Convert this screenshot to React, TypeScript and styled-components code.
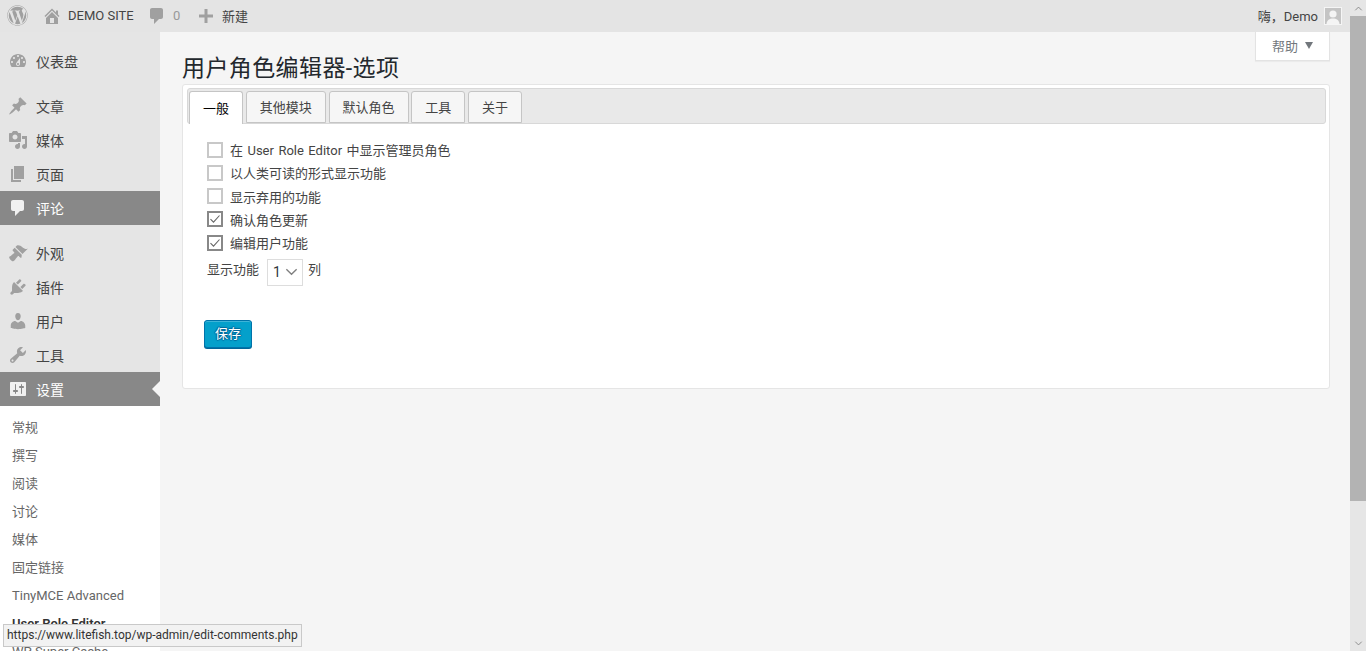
import styled, { createGlobalStyle } from 'styled-components';
import { FaWordpress } from 'react-icons/fa';

const GlobalStyle = createGlobalStyle`
    html, body {
        margin: 0;
        padding: 0;
        height: 100%;
        overflow: hidden;
    }
    body {
        font-family: Roboto, "Noto Sans CJK SC", sans-serif;
        font-size: 13px;
        color: #444;
        background: #f5f5f5;
    }
`;

const ICONS: Record<string, string> = {
    dashboard:
        'M3.76 16h12.48c1.1-1.37 1.76-3.11 1.76-5 0-4.42-3.58-8-8-8s-8 3.58-8 8c0 1.89.66 3.63 1.76 5zM10 4c.55 0 1 .45 1 1s-.45 1-1 1-1-.45-1-1 .45-1 1-1zM6 6c.55 0 1 .45 1 1s-.45 1-1 1-1-.45-1-1 .45-1 1-1zm8 0c.55 0 1 .45 1 1s-.45 1-1 1-1-.45-1-1 .45-1 1-1zm-5.37 5.55L12 7v6c0 1.1-.9 2-2 2s-2-.9-2-2c0-.57.24-1.08.63-1.45zM4 10c.55 0 1 .45 1 1s-.45 1-1 1-1-.45-1-1 .45-1 1-1zm12 0c.55 0 1 .45 1 1s-.45 1-1 1-1-.45-1-1 .45-1 1-1zm-5 3c0-.55-.45-1-1-1s-1 .45-1 1 .45 1 1 1 1-.45 1-1z',
    post: 'M10.44 3.02l1.82-1.82 6.36 6.35-1.83 1.82c-1.05-.68-2.48-.57-3.41.36l-.75.75c-.92.93-1.04 2.35-.35 3.41l-1.83 1.82-2.41-2.41-2.8 2.79c-.42.42-3.38 2.71-3.8 2.29s1.86-3.39 2.28-3.81l2.79-2.79L4.1 9.36l1.83-1.82c1.05.69 2.48.57 3.4-.36l.75-.75c.93-.92 1.05-2.35.36-3.41z',
    media: 'M13 11V4c0-.55-.45-1-1-1h-1.67L9 1H5L3.67 3H2c-.55 0-1 .45-1 1v7c0 .55.45 1 1 1h10c.55 0 1-.45 1-1zM7 4.5c1.38 0 2.5 1.12 2.5 2.5S8.38 9.5 7 9.5 4.5 8.38 4.5 7 5.62 4.5 7 4.5zM14 6h5v10.5c0 1.38-1.12 2.5-2.5 2.5S14 17.88 14 16.5s1.12-2.5 2.5-2.5c.17 0 .34.02.5.05V9h-3V6zm-4 8.05V13h2v3.5c0 1.38-1.12 2.5-2.5 2.5S7 17.88 7 16.5 8.12 14 9.5 14c.17 0 .34.02.5.05z',
    page: 'M6 15V2h10v13H6zm-1 1h8v2H3V5h2v11z',
    comments:
        'M5 2h9c1.1 0 2 .9 2 2v7c0 1.1-.9 2-2 2h-2l-5 5v-5H5c-1.1 0-2-.9-2-2V4c0-1.1.9-2 2-2z',
    appearance:
        'M14.48 11.06L7.41 3.99l1.5-1.5c.5-.56 2.3-.47 3.51.32 1.21.8 1.43 1.28 2.91 2.1 1.18.64 2.45 1.26 4.45.85zm-.71.71L6.7 4.7 4.93 6.47c-.39.39-.39 1.02 0 1.41l1.06 1.06c.39.39.39 1.03 0 1.42-.6.6-1.43 1.11-2.21 1.69-.35.26-.7.53-1.01.84C1.43 13.23.97 14 1.24 14.76 1.7 16 3 17.7 4.24 18.16c.76.27 1.53-.19 2.87-1.53.31-.31.58-.66.84-1.01.58-.78 1.09-1.61 1.69-2.21.39-.39 1.03-.39 1.42 0l1.06 1.06c.39.39 1.02.39 1.41 0z',
    plugins:
        'M13.11 4.36L9.87 7.6 8 5.73l3.24-3.24c.35-.34 1.05-.2 1.56.32.52.51.66 1.21.31 1.55zm-8 1.77l.91-1.12 9.01 9.01-1.19.84c-.71.71-2.63 1.16-3.82 1.16H6.14L4.9 17.26c-.59.59-1.54.59-2.12 0-.59-.58-.59-1.53 0-2.12l1.24-1.24v-3.88c0-1.13.4-3.19 1.09-3.89zm7.26 3.97l3.24-3.24c.34-.35 1.04-.21 1.55.31.52.51.66 1.21.31 1.55l-3.24 3.25z',
    users: 'M10 9.25c-2.27 0-2.73-3.44-2.73-3.44C7 4.02 7.82 2 9.97 2c2.16 0 2.98 2.02 2.71 3.81 0 0-.41 3.44-2.68 3.44zm0 2.57L12.72 10c2.39 0 4.52 2.33 4.52 4.53v2.49s-3.65 1.13-7.24 1.13c-3.65 0-7.24-1.13-7.24-1.13v-2.49c0-2.25 1.94-4.48 4.47-4.48z',
    tools: 'M16.68 9.77c-1.34 1.34-3.3 1.67-4.95.99l-5.41 6.52c-.99.99-2.59.99-3.58 0s-.99-2.59 0-3.57l6.52-5.42c-.68-1.65-.35-3.61.99-4.95 1.28-1.28 3.12-1.62 4.72-1.06l-2.89 2.89 2.82 2.82 2.86-2.87c.53 1.58.18 3.39-1.08 4.65zM3.81 16.21c.4.39 1.04.39 1.43 0 .4-.4.4-1.04 0-1.43-.39-.4-1.03-.4-1.43 0-.39.39-.39 1.03 0 1.43z',
    settings:
        'M18 16V4c0-.55-.45-1-1-1H3c-.55 0-1 .45-1 1v12c0 .55.45 1 1 1h14c.55 0 1-.45 1-1zM8 11h1c.55 0 1 .45 1 1s-.45 1-1 1H8v1.5c0 .28-.22.5-.5.5s-.5-.22-.5-.5V13H6c-.55 0-1-.45-1-1s.45-1 1-1h1V5.5c0-.28.22-.5.5-.5s.5.22.5.5V11zm5-2h-1c-.55 0-1-.45-1-1s.45-1 1-1h1V5.5c0-.28.22-.5.5-.5s.5.22.5.5V7h1c.55 0 1 .45 1 1s-.45 1-1 1h-1v5.5c0 .28-.22.5-.5.5s-.5-.22-.5-.5V9z',
    home: 'M16 8.5l1.53 1.53-1.06 1.06L10 4.62l-6.47 6.47-1.06-1.06L10 2.5l4 4v-2h2v4zm-6-2.46l6 5.99V18H4v-5.97zM12 17v-5H8v5h4z',
    plus: 'M17 8.5v3h-5.5V17h-3v-5.5H3v-3h5.5V3h3v5.5z'
};

const Dashicon = ({ name, color = '#a0a0a0' }: { name: string; color?: string }) => (
    <svg width="20" height="20" viewBox="0 0 20 20" fill={color}>
        <path d={ICONS[name]} />
    </svg>
);

const Page = styled.div`
    display: flex;
    width: 1366px;
    height: 651px;
    overflow: hidden;
`;

const Window = styled.div`
    flex: 1;
    min-width: 0;
    display: flex;
    flex-direction: column;
`;

const TopBar = styled.header`
    box-sizing: border-box;
    height: 32px;
    padding-bottom: 1px;
    flex-shrink: 0;
    display: flex;
    align-items: center;
    background: #e4e4e4;
    color: #444;
    font-size: 13px;
`;

const BarItem = styled.div<{ $gap?: number; $width?: number }>`
    display: flex;
    align-items: center;
    gap: ${(p) => p.$gap ?? 5}px;
    width: ${(p) => (p.$width ? `${p.$width}px` : 'auto')};
    flex-shrink: 0;
`;

const Logo = styled(BarItem)`
    padding-left: 7px;
    color: #a0a0a0;
`;

const CommentCount = styled.span`
    color: #999;
`;

const UserBox = styled.div`
    margin-left: auto;
    display: flex;
    align-items: center;
    gap: 6px;
    padding-right: 8px;
`;

const Avatar = styled.span`
    width: 16px;
    height: 16px;
    border: 1px solid #f5f5f5;
    background: #c4c4c4;
    display: block;
    overflow: hidden;
`;

const Body = styled.div`
    flex: 1;
    min-height: 0;
    display: flex;
`;

const Sidebar = styled.nav`
    width: 160px;
    flex-shrink: 0;
    padding-top: 12px;
    background: #e5e5e5;
    overflow: hidden;
`;

const MenuGroup = styled.ul`
    list-style: none;
    margin: 0 0 11px;
    padding: 0;
`;

const MenuItem = styled.li<{ $active?: boolean; $current?: boolean }>`
    position: relative;
    height: 34px;
    display: flex;
    align-items: center;
    gap: 8px;
    padding-left: 8px;
    font-size: 14px;
    color: ${(p) => (p.$active ? '#fff' : '#444')};
    background: ${(p) => (p.$active ? '#888' : 'transparent')};

    ${(p) =>
        p.$current &&
        `&::after {
            content: '';
            position: absolute;
            right: 0;
            top: 9px;
            border: 8px solid transparent;
            border-left-width: 0;
            border-right-color: #f5f5f5;
        }`}
`;

const SubMenu = styled.ul`
    list-style: none;
    margin: -11px 0 0;
    padding: 7px 0;
    background: #fff;
`;

const SubItem = styled.li<{ $current?: boolean }>`
    height: 28px;
    line-height: 30px;
    padding-left: 12px;
    font-size: 13px;
    color: ${(p) => (p.$current ? '#333' : '#666')};
    font-weight: ${(p) => (p.$current ? 600 : 400)};
`;

const Content = styled.main`
    flex: 1;
    min-width: 0;
    padding: 0 20px 0 22px;
    background: #f5f5f5;
`;

const HelpRow = styled.div`
    display: flex;
    justify-content: flex-end;
    height: 29px;
`;

const HelpTab = styled.div`
    width: 75px;
    box-sizing: border-box;
    display: flex;
    align-items: center;
    gap: 7px;
    padding: 0 0 2px 16px;
    background: #fff;
    border: 1px solid #e3e3e3;
    border-top: 0;
    color: #72777c;
    font-size: 13px;
    box-shadow: 0 1px 1px rgba(0, 0, 0, 0.04);

    &::after {
        content: '';
        border: 4.5px solid transparent;
        border-top: 7px solid #72777c;
        border-bottom: 0;
    }
`;

const Title = styled.h1`
    margin: -9px 0 0;
    height: 32px;
    line-height: 34px;
    font-size: 23px;
    font-weight: 400;
    letter-spacing: 0.4px;
    color: #23282d;
`;

const Card = styled.section`
    box-sizing: border-box;
    height: 305px;
    padding: 3px 3px 0 4px;
    background: #fff;
    border: 1px solid #e5e5e5;
    border-radius: 3px;
`;

const TabBar = styled.div`
    box-sizing: border-box;
    height: 36px;
    display: flex;
    align-items: flex-end;
    gap: 2.75px;
    padding-left: 1px;
    background: #e9e9e9;
    border: 1px solid #d8d8d8;
    border-radius: 3px;
`;

const Tab = styled.div<{ $active?: boolean }>`
    box-sizing: border-box;
    height: ${(p) => (p.$active ? 33 : 32)}px;
    margin-bottom: ${(p) => (p.$active ? -1 : 0)}px;
    padding: 0 13px 2px;
    display: flex;
    align-items: center;
    border: 1px solid #c5c5c5;
    border-bottom: ${(p) => (p.$active ? 0 : 1)}px solid #c5c5c5;
    border-radius: 3px 3px 0 0;
    background: ${(p) => (p.$active ? '#fff' : '#f6f6f6')};
    color: ${(p) => (p.$active ? '#000' : '#454545')};
    font-size: 13px;
`;

const Form = styled.form`
    display: flex;
    flex-direction: column;
    padding: 14px 0 0 20px;
`;

const CheckRow = styled.label`
    height: 23.25px;
    display: flex;
    align-items: center;
    gap: 7px;
    font-size: 13px;
    word-spacing: 1.25px;
    color: #444;
`;

const CheckBox = styled.span<{ $checked?: boolean }>`
    box-sizing: border-box;
    width: 16px;
    height: 16px;
    display: flex;
    align-items: center;
    justify-content: center;
    background: #fff;
    border: ${(p) => (p.$checked ? '2px solid #888' : '2px solid #c8c8c8')};
`;

const SelectRow = styled.div`
    display: flex;
    align-items: flex-start;
    gap: 5px;
    margin-top: 5px;
    height: 27px;
    line-height: 22px;
    font-size: 13px;
    color: #444;
`;

const SelectBox = styled.div`
    box-sizing: border-box;
    width: 36px;
    height: 27px;
    margin-left: 3px;
    padding: 0 4px 2px 5px;
    display: flex;
    align-items: center;
    justify-content: space-between;
    border: 1px solid #ddd;
    background: #fff;
    font-size: 14px;
    color: #32373c;
`;

const SaveButton = styled.button`
    box-sizing: border-box;
    width: 48px;
    height: 28px;
    margin: 34px 0 0 -3px;
    padding: 0 0 4px;
    background: #04a0cb;
    border: 1px solid #0073aa;
    border-radius: 3px;
    box-shadow: 0 1px 0 #006799, inset 0 1px 0 rgba(120, 200, 230, 0.5);
    color: #fff;
    font-family: inherit;
    font-size: 13px;
    text-shadow: 0 -1px 1px #006799, 1px 0 1px #006799, 0 1px 1px #006799, -1px 0 1px #006799;
`;

const Scrollbar = styled.div`
    width: 16px;
    flex-shrink: 0;
    display: flex;
    flex-direction: column;
    background: #e6e6e6;
`;

const ScrollArrow = styled.div`
    height: 16px;
    flex-shrink: 0;
    display: flex;
    align-items: center;
    justify-content: center;
`;

const ScrollThumb = styled.div`
    height: 485px;
    flex-shrink: 0;
    background: #b3b3b3;
`;

const ScrollTrack = styled.div`
    flex: 1;
`;

const StatusBubble = styled.div`
    position: absolute;
    left: 3px;
    top: 624px;
    box-sizing: border-box;
    width: 299px;
    height: 23px;
    padding-left: 3px;
    line-height: 21px;
    white-space: nowrap;
    background: #f2f2f2;
    border: 1px solid #c9c9c9;
    color: #333;
    font-size: 12px;
`;

const Chevron = ({ up, size = 11 }: { up?: boolean; size?: number }) => (
    <svg width={size} height={Math.round(size * 0.6)} viewBox="0 0 11 7" fill="none" stroke="#808080" strokeWidth="1.2">
        <path d={up ? 'M1 6l4.5-4.5L10 6' : 'M1 1l4.5 4.5L10 1'} />
    </svg>
);

const CheckMark = () => (
    <svg width="12" height="12" viewBox="0 0 12 12" fill="none" stroke="#666" strokeWidth="1.1">
        <path d="M1.5 6.2l3 3L10.5 2.5" />
    </svg>
);

const topGroup = [
    { icon: 'post', label: '文章' },
    { icon: 'media', label: '媒体' },
    { icon: 'page', label: '页面' },
    { icon: 'comments', label: '评论', active: true }
];

const lowerGroup = [
    { icon: 'appearance', label: '外观' },
    { icon: 'plugins', label: '插件' },
    { icon: 'users', label: '用户' },
    { icon: 'tools', label: '工具' },
    { icon: 'settings', label: '设置', active: true, current: true }
];

const subItems = ['常规', '撰写', '阅读', '讨论', '媒体', '固定链接', 'TinyMCE Advanced', 'User Role Editor', 'WP Super Cache'];

const tabs = ['一般', '其他模块', '默认角色', '工具', '关于'];

const options = [
    { label: '在 User Role Editor 中显示管理员角色' },
    { label: '以人类可读的形式显示功能' },
    { label: '显示弃用的功能' },
    { label: '确认角色更新', checked: true },
    { label: '编辑用户功能', checked: true }
];

export default function App() {
    return (
        <Page>
            <GlobalStyle />
            <Window>
                <TopBar>
                    <Logo $width={35}>
                        <FaWordpress size={21} />
                    </Logo>
                    <BarItem $width={105} $gap={6}>
                        <Dashicon name="home" />
                        DEMO SITE
                    </BarItem>
                    <BarItem $width={49} $gap={6}>
                        <Dashicon name="comments" />
                        <CommentCount>0</CommentCount>
                    </BarItem>
                    <BarItem $gap={6}>
                        <Dashicon name="plus" />
                        新建
                    </BarItem>
                    <UserBox>
                        嗨，Demo
                        <Avatar>
                            <svg width="16" height="16" viewBox="0 0 16 16" fill="#f4f4f4">
                                <circle cx="8" cy="6" r="3.6" />
                                <path d="M1.5 16c.4-4 3-5.5 6.5-5.5s6.1 1.5 6.5 5.5z" />
                            </svg>
                        </Avatar>
                    </UserBox>
                </TopBar>
                <Body>
                    <Sidebar>
                        <MenuGroup>
                            <MenuItem>
                                <Dashicon name="dashboard" />
                                仪表盘
                            </MenuItem>
                        </MenuGroup>
                        <MenuGroup>
                            {topGroup.map((item) => (
                                <MenuItem key={item.label} $active={item.active}>
                                    <Dashicon name={item.icon} color={item.active ? '#f0f0f0' : '#a0a0a0'} />
                                    {item.label}
                                </MenuItem>
                            ))}
                        </MenuGroup>
                        <MenuGroup>
                            {lowerGroup.map((item) => (
                                <MenuItem key={item.label} $active={item.active} $current={item.current}>
                                    <Dashicon name={item.icon} color={item.active ? '#f0f0f0' : '#a0a0a0'} />
                                    {item.label}
                                </MenuItem>
                            ))}
                        </MenuGroup>
                        <SubMenu>
                            {subItems.map((item) => (
                                <SubItem key={item} $current={item === 'User Role Editor'}>
                                    {item}
                                </SubItem>
                            ))}
                        </SubMenu>
                    </Sidebar>
                    <Content>
                        <HelpRow>
                            <HelpTab>帮助</HelpTab>
                        </HelpRow>
                        <Title>用户角色编辑器-选项</Title>
                        <Card>
                            <TabBar>
                                {tabs.map((tab, i) => (
                                    <Tab key={tab} $active={i === 0}>
                                        {tab}
                                    </Tab>
                                ))}
                            </TabBar>
                            <Form>
                                {options.map((option) => (
                                    <CheckRow key={option.label}>
                                        <CheckBox $checked={option.checked}>
                                            {option.checked && <CheckMark />}
                                        </CheckBox>
                                        {option.label}
                                    </CheckRow>
                                ))}
                                <SelectRow>
                                    显示功能
                                    <SelectBox>
                                        1
                                        <Chevron size={13} />
                                    </SelectBox>
                                    列
                                </SelectRow>
                                <SaveButton type="button">保存</SaveButton>
                            </Form>
                        </Card>
                    </Content>
                </Body>
            </Window>
            <Scrollbar>
                <ScrollArrow>
                    <Chevron up size={9} />
                </ScrollArrow>
                <ScrollThumb />
                <ScrollTrack />
                <ScrollArrow>
                    <Chevron size={9} />
                </ScrollArrow>
            </Scrollbar>
            <StatusBubble>https://www.litefish.top/wp-admin/edit-comments.php</StatusBubble>
        </Page>
    );
}
